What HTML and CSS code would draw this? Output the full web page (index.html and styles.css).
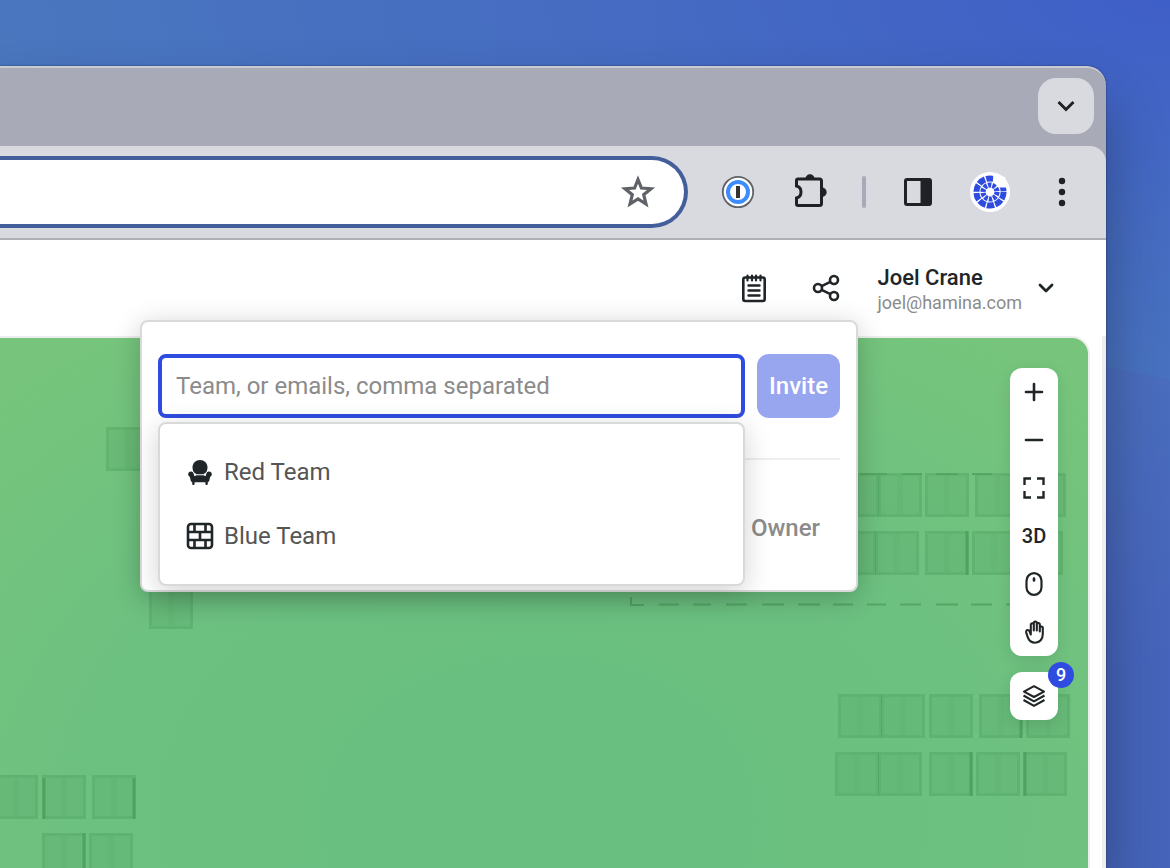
FILE: index.html
```html
<!DOCTYPE html>
<html lang="en">
<head>
<meta charset="utf-8">
<meta name="viewport" content="width=device-width, initial-scale=1">
<title>Share project</title>
<link rel="stylesheet" href="styles.css">
</head>
<body>
<div class="window">
  <div class="tab-strip">
    <button class="tab-search" type="button" aria-label="Search tabs">
      <svg width="24" height="24" viewBox="0 0 24 24" fill="none" stroke="#202124" stroke-width="3"><path d="M4.500 8 12 15.500 19.500 8"/></svg>
    </button>
  </div>
  <div class="toolbar">
    <div class="address">
      <input class="address-input" type="text" aria-label="Address">
      <button class="icon-button" type="button" aria-label="Bookmark">
        <svg width="36" height="36" viewBox="0 0 36 36" fill="none" stroke="#5f6368" stroke-width="3.200"><path d="M18 5.500 21.400 14 31 14.700 23.700 20.700 26 30 18 25 10 30 12.300 20.700 5 14.700 14.600 14Z"/></svg>
      </button>
    </div>
    <div class="extensions">
      <button class="icon-button" type="button" aria-label="Password manager">
        <svg width="36" height="36" viewBox="0 0 36 36"><circle cx="18" cy="18" r="15.200" fill="#fff" stroke="#5f6368" stroke-width="1.800"/><circle cx="18" cy="18" r="10" fill="#fff" stroke="#3d8cff" stroke-width="4"/><path d="M16 12h4v12h-4z" fill="#333"/></svg>
      </button>
      <button class="icon-button" type="button" aria-label="Extensions">
        <svg width="36" height="36" viewBox="0 0 36 36"><path d="M4.500 6.500a1.500 1.500 0 0 1 1.500-1.500H27.500a2 2 0 0 1 2 2V29.500a2 2 0 0 1-2 2H6a1.500 1.500 0 0 1-1.500-1.500V24c6-1.500 6-10.500 0-12Z" fill="none" stroke="#202124" stroke-width="3"/><path d="M13.300 5a4.700 4.700 0 0 1 9.400 0ZM30 13.500a4.700 4.700 0 0 1 0 9.400Z" fill="#202124"/></svg>
      </button>
      <span class="separator"></span>
      <button class="icon-button" type="button" aria-label="Side panel">
        <svg width="36" height="36" viewBox="0 0 36 36"><rect x="5.500" y="5.500" width="25" height="25" rx="1.500" fill="none" stroke="#202124" stroke-width="3"/><path d="M20.500 5H30v26h-9.500z" fill="#202124"/></svg>
      </button>
      <button class="icon-button avatar" type="button" aria-label="Browser profile">
        <svg width="40" height="40" viewBox="0 0 40 40" fill="none" stroke="#2f4ce0"><circle cx="20" cy="20" r="13.600" stroke-width="6" stroke-dasharray="7.300 1.245"/><circle cx="20" cy="20" r="7" stroke-width="5.200" stroke-dasharray="3.300 1.098"/><path d="M23 2 23.500 10 28.500 15.500 38 15.500 35 5Z" fill="#fff" stroke="none"/></svg>
      </button>
      <button class="icon-button" type="button" aria-label="Browser menu">
        <svg width="36" height="36" viewBox="0 0 36 36" fill="#202124"><circle cx="18" cy="7" r="3.200"/><circle cx="18" cy="18" r="3.200"/><circle cx="18" cy="29" r="3.200"/></svg>
      </button>
    </div>
  </div>

  <div class="app">
    <header class="header">
      <button class="icon-button" type="button" aria-label="Notes">
        <svg width="32" height="32" viewBox="0 0 32 32" fill="none" stroke="#202528" stroke-width="2.600" stroke-linecap="round"><rect x="5.300" y="5.500" width="21.400" height="23.500" rx="2"/><path d="M9.500 3.500v5M14 3.500v5M18 3.500v5M22.500 3.500v5" stroke-width="2.200"/><path d="M10.500 13.500h11M10.500 18.500h11M10.500 23.500h11" stroke-width="2.400"/></svg>
      </button>
      <button class="icon-button" type="button" aria-label="Share">
        <svg width="32" height="32" viewBox="0 0 32 32" fill="none" stroke="#202528" stroke-width="2.600"><circle cx="8" cy="16" r="4"/><circle cx="24" cy="8" r="4"/><circle cx="24" cy="24" r="4"/><path d="M11.600 14.200 20.400 9.800M11.600 17.800 20.400 22.200"/></svg>
      </button>
      <button class="account" type="button">
        <span class="account-text">
          <span class="account-name">Joel Crane</span>
          <span class="account-email">joel@hamina.com</span>
        </span>
        <svg width="24" height="24" viewBox="0 0 24 24" fill="none" stroke="#202528" stroke-width="2.800" stroke-linecap="round" stroke-linejoin="round"><path d="M6 9 12 15 18 9"/></svg>
      </button>
    </header>

    <main class="workspace">
      <div class="map">
        <svg class="plan" width="1088" height="560" viewBox="0 338 1088 560" aria-hidden="true">
          <defs>
            <g id="desk" fill="#2e7d3c">
              <rect width="44" height="44" fill-opacity=".11"/>
              <path d="M0 0h44v44H0zM3 3v38h38V3z" fill-rule="evenodd" fill-opacity=".11"/>
              <path d="M19 3h6v38h-6z" fill-opacity=".04"/>
            </g>
          </defs>
          <use href="#desk" x="106" y="427"/><use href="#desk" x="149" y="585"/>
          <use href="#desk" x="835" y="473"/><use href="#desk" x="878" y="473"/><use href="#desk" x="925" y="473"/><use href="#desk" x="975" y="473"/><use href="#desk" x="1022" y="473"/>
          <use href="#desk" x="832" y="531"/><use href="#desk" x="875" y="531"/><use href="#desk" x="925" y="531"/><use href="#desk" x="972" y="531"/><use href="#desk" x="1019" y="531"/>
          <use href="#desk" x="838" y="694"/><use href="#desk" x="881" y="694"/><use href="#desk" x="929" y="694"/><use href="#desk" x="979" y="694"/><use href="#desk" x="1026" y="694"/>
          <use href="#desk" x="835" y="752"/><use href="#desk" x="878" y="752"/><use href="#desk" x="929" y="752"/><use href="#desk" x="976" y="752"/><use href="#desk" x="1023" y="752"/>
          <use href="#desk" x="-6" y="775"/><use href="#desk" x="42" y="775"/><use href="#desk" x="92" y="775"/>
          <use href="#desk" x="42" y="833"/><use href="#desk" x="89" y="833"/>
          <path d="M967 531v44M1021 694v44M971 752v44M1025 752v44M44 778v41M134 778v41M84 833v44" stroke="#50a35f" stroke-width="3"/>
          <path d="M631 597v8h13M659 604.500h20M693 604.500h18M726 604.500h21M762 604.500h22M798 604.500h22M833 604.500h20M867 604.500h19M900 604.500h21M936 604.500h22M971 604.500h21M1006 604.500h20" fill="none" stroke="#55a563" stroke-width="2"/>
          <path d="M860 474h27M902 474h20M936 474h22M972 474h20" stroke="#55a563" stroke-width="2"/>
        </svg>
        <div class="map-tools">
          <div class="tool-group">
            <button class="tool" type="button" aria-label="Zoom in"><svg width="24" height="24" viewBox="0 0 24 24" stroke="#202528" stroke-width="2.600" stroke-linecap="round"><path d="M4 12h16M12 4v16"/></svg></button>
            <button class="tool" type="button" aria-label="Zoom out"><svg width="24" height="24" viewBox="0 0 24 24" stroke="#202528" stroke-width="2.600" stroke-linecap="round"><path d="M4 12h16"/></svg></button>
            <button class="tool" type="button" aria-label="Fit to screen"><svg width="24" height="24" viewBox="0 0 24 24" fill="none" stroke="#202528" stroke-width="2.400"><path d="M2.500 9V2.500H9M15 2.500h6.500V9M21.500 15v6.500H15M9 21.500H2.500V15"/></svg></button>
            <button class="tool" type="button">3D</button>
            <button class="tool" type="button" aria-label="Mouse mode"><svg width="24" height="24" viewBox="0 0 24 24" fill="none" stroke="#202528" stroke-width="2.200" stroke-linecap="round"><rect x="4.500" y="1.200" width="15" height="21.600" rx="7.500"/><path d="M12 6.500v2" stroke-width="2.600"/></svg></button>
            <button class="tool" type="button" aria-label="Pan"><svg width="24" height="24" viewBox="0 0 24 24" fill="none" stroke="#202528" stroke-width="2.100" stroke-linecap="round" stroke-linejoin="round"><path d="M8.800 11.500V4.800a1.500 1.500 0 0 1 3 0V10.500M11.800 4.800V3a1.500 1.500 0 0 1 3 0v7.500M14.800 4.500a1.500 1.500 0 0 1 3 0v7M17.800 8a1.500 1.500 0 0 1 3 0v6c0 5-3 8.700-7.800 8.700-3.300 0-5.500-1.500-6.800-4.400L4.300 12.800C3.800 11.300 4.500 10 5.600 10c1 0 1.700.5 2.100 1.700L8.800 14.500V9"/></svg></button>
          </div>
          <div class="tool-group layers">
            <button class="tool" type="button" aria-label="Layers"><svg width="24" height="24" viewBox="0 0 24 24" fill="none" stroke="#202528" stroke-width="2.100" stroke-linejoin="round"><path d="M12 2.200 22 7.600 12 13 2 7.600ZM1.500 11.500 12 17.300 22.500 11.500M1.500 16 12 21.800 22.500 16"/></svg></button>
            <span class="badge">9</span>
          </div>
        </div>
      </div>
    </main>

    <form class="share-dialog" aria-label="Share project">
      <div class="invite-row">
        <input class="invite-input" type="text" aria-label="Team or emails" placeholder="Team, or emails, comma separated">
        <button class="invite-button" type="button">Invite</button>
      </div>
      <div class="members">
        <span class="role">Owner</span>
      </div>
      <div class="suggestions">
        <button class="suggestion" type="button">
          <svg width="28" height="28" viewBox="0 0 28 28" fill="#202528"><path d="M14 2c4.200 0 7.500 3.200 7.500 7.200 0 2.200-.6 3.800-1.700 5.300l-2.300 1.700h-7l-2.300-1.700C7.100 13 6.500 11.400 6.500 9.200 6.500 5.200 9.800 2 14 2Z"/><path d="M2.200 16.300c0-1.700 1.200-2.700 2.700-2.700 1.800 0 2.600 1.200 3 3.200l.6 1.500 2-1h7l2 1 .6-1.500c.4-2 1.200-3.200 3-3.200 1.500 0 2.700 1 2.700 2.700 0 1.500-1 2.200-1.700 2.600l-.8 3.500c-.2.800-.6 1.400-1.500 1.600v1.800c0 .8-.5 1.200-1.200 1.200s-1.200-.4-1.200-1.200v-1.600H8.600v1.600c0 .8-.5 1.200-1.200 1.200s-1.200-.4-1.200-1.200V24c-.9-.2-1.300-.8-1.500-1.600l-.8-3.500c-.7-.4-1.700-1.100-1.700-2.600Z"/></svg>
          Red Team
        </button>
        <button class="suggestion" type="button">
          <svg width="28" height="28" viewBox="0 0 28 28" fill="none" stroke="#202528" stroke-width="2.600"><rect x="2" y="2" width="24" height="24" rx="3"/><path d="M2 10h24M2 18h24M8.500 2v8M19.500 2v8M14 10v8M8.500 18v8M19.500 18v8"/></svg>
          Blue Team
        </button>
      </div>
    </form>
  </div>
</div>
</body>
</html>
```
FILE: styles.css
```css
* { box-sizing: border-box; }

body {
  margin: 0;
  min-height: 100vh;
  display: flex;
  overflow: hidden;
  padding: 66px 64px 0 0;
  font-family: Roboto, "Liberation Sans", sans-serif;
  color: #202528;
  background:
    linear-gradient(192deg, transparent 34%, #4a6dbd 34%, #4664bb 60%, #4664b8 100%),
    radial-gradient(ellipse 1200px 480px at 100% 0, #3f5fc8 0%, #456bc2 45%, #4a77be 100%);
}

button, input { font: inherit; color: inherit; }
button { border: 0; padding: 0; background: none; cursor: pointer; }
svg { display: block; flex: none; }

.window {
  flex: 1;
  min-width: 0;
  display: flex;
  flex-direction: column;
  border-radius: 0 20px 0 0;
  background: #a8aab7;
  box-shadow: 0 0 2px rgba(0, 0, 0, 0.5), 0 36px 56px rgba(25, 35, 60, 0.45);
}

.tab-strip {
  display: flex;
  justify-content: flex-end;
  align-items: flex-start;
  height: 80px;
  padding: 10px 12px;
  border-top: 2px solid #c9cbd3;
  border-radius: 0 20px 0 0;
}

.tab-search {
  display: grid;
  place-items: center;
  width: 56px;
  height: 56px;
  border-radius: 18px;
  background: #d9dadf;
}

.toolbar {
  display: flex;
  align-items: center;
  gap: 32px;
  height: 94px;
  padding-right: 26px;
  border-bottom: 2px solid #aeafb6;
  border-radius: 0 16px 0 0;
  background: #d9dadf;
}

.address {
  flex: 1;
  min-width: 0;
  display: flex;
  align-items: center;
  height: 72px;
  padding-right: 28px;
  border: 4px solid #435f9b;
  border-left: 0;
  border-radius: 0 36px 36px 0;
  background: #fff;
}

.address-input {
  flex: 1;
  min-width: 0;
  height: 48px;
  border: 0;
  outline: 0;
  background: none;
}

.extensions { display: flex; align-items: center; gap: 36px; }
.separator { width: 4px; height: 32px; margin: 0 -2px 0 -4px; border-radius: 2px; background: #a8aab7; }
.extensions .separator { margin: 0 -2px; }
.avatar { margin: 0 -2px; border-radius: 50%; background: #fff; }

.app {
  position: relative;
  flex: 1;
  display: flex;
  flex-direction: column;
  background: #fff;
}

.header {
  display: flex;
  justify-content: flex-end;
  align-items: center;
  gap: 40px;
  height: 96px;
  padding-right: 48px;
}

.account { display: flex; align-items: center; gap: 12px; text-align: left; }
.account-text { display: flex; flex-direction: column; padding-top: 4px; }
.account-name { font-size: 22px; line-height: 26px; font-weight: 500; }
.account-email { font-size: 18px; line-height: 24px; color: #8b8b8b; }
.header .account { margin-left: -4px; }

.workspace {
  flex: 1;
  display: flex;
  padding-right: 12px;
  border-right: 4px solid #eee;
}

.map {
  position: relative;
  flex: 1;
  display: flex;
  justify-content: flex-end;
  align-items: flex-start;
  padding: 30px;
  overflow: hidden;
  border: 2px solid #eee;
  border-left: 0;
  border-bottom: 0;
  border-radius: 0 18px 0 0;
  background: radial-gradient(ellipse 800px 600px at 540px 480px, #68bf7f 0%, #6cc080 55%, #77c57c 100%);
}

.plan { position: absolute; top: 0; right: 0; }

.map-tools { position: relative; display: flex; flex-direction: column; gap: 16px; }

.tool-group {
  position: relative;
  border-radius: 12px;
  background: #fff;
  box-shadow: 0 4px 16px rgba(0, 0, 0, 0.1);
}

.tool {
  display: grid;
  place-items: center;
  width: 48px;
  height: 48px;
  font-size: 20px;
  font-weight: 500;
}

.badge {
  position: absolute;
  top: -10px;
  right: -16px;
  width: 26px;
  height: 26px;
  border-radius: 50%;
  background: #2f4ce0;
  color: #fff;
  font-size: 18px;
  line-height: 26px;
  font-weight: 500;
  text-align: center;
}

.share-dialog {
  position: absolute;
  top: 80px;
  left: 140px;
  right: 248px;
  padding: 32px 16px 30px;
  border: 2px solid #d9d9d9;
  border-radius: 8px;
  background: #fff;
  box-shadow: 0 6px 28px rgba(0, 0, 0, 0.22);
}

.invite-row { display: flex; gap: 12px; height: 64px; }

.invite-input {
  flex: 1;
  min-width: 0;
  padding: 0 14px;
  border: 4px solid #2f4ce0;
  border-radius: 8px;
  outline: 0;
  background: #fff;
  font-size: 24px;
}
.invite-input::placeholder { color: #8b8b8b; opacity: 1; }

.invite-button {
  padding: 0 12px;
  border-radius: 12px;
  background: #98a5ef;
  color: #fff;
  font-size: 24px;
  font-weight: 500;
}

.members {
  display: flex;
  justify-content: flex-end;
  margin-top: 40px;
  padding: 52px 20px 16px;
  border-top: 2px solid #eee;
}

.role { font-size: 24px; line-height: 32px; font-weight: 500; color: #8b8b8b; }

.suggestions {
  position: absolute;
  top: 100px;
  left: 16px;
  right: 111px;
  padding: 16px 12px;
  border: 2px solid #d9d9d9;
  border-radius: 8px;
  background: #fff;
  box-shadow: 0 6px 28px rgba(0, 0, 0, 0.18);
}

.suggestion {
  display: flex;
  align-items: center;
  gap: 10px;
  width: 100%;
  height: 64px;
  padding: 0 14px;
  font-size: 24px;
  color: #555;
}
```
